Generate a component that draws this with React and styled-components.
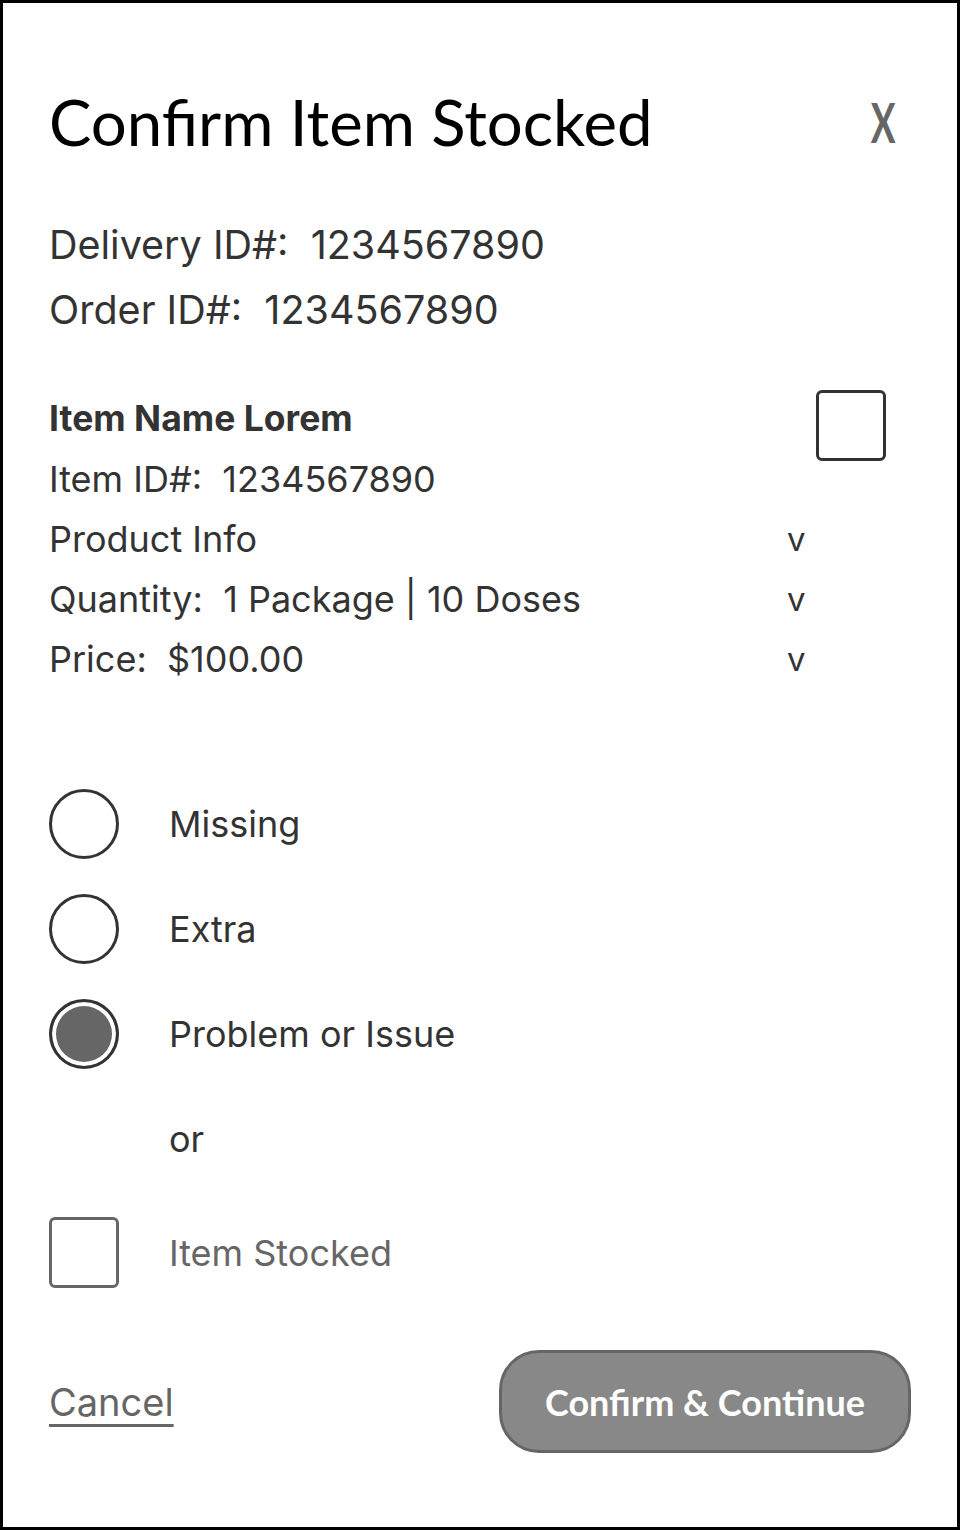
import React from "react";
import styled, { createGlobalStyle } from "styled-components";

const GlobalStyle = createGlobalStyle`
  html, body {
    margin: 0;
    padding: 0;
    background: #ffffff;
  }
  * {
    box-sizing: border-box;
  }
`;

const Frame = styled.div`
  width: 960px;
  height: 1530px;
  border: 3px solid #000;
  background: #fff;
  padding: 0 46px 0 46px;
  display: flex;
  flex-direction: column;
  font-family: Inter, "Noto Sans", sans-serif;
  color: #333;
`;

const Header = styled.div`
  display: flex;
  justify-content: space-between;
  align-items: flex-start;
  padding-top: 79px;
  height: 210px;
`;

const Title = styled.h1`
  margin: 0;
  font-family: Lato, "Open Sans", sans-serif;
  font-weight: 400;
  font-size: 63.5px;
  line-height: 80px;
  color: #000;
`;

const Close = styled.button`
  display: inline-block;
  border: none;
  background: none;
  padding: 0;
  margin-right: 15px;
  font-family: Lato, "Open Sans", sans-serif;
  font-weight: 700;
  font-size: 56px;
  line-height: 80px;
  color: #666;
  transform: scaleX(0.66);
  transform-origin: right center;
  cursor: pointer;
`;

const InfoLine = styled.div`
  font-size: 39.5px;
  line-height: 65px;
  white-space: pre;
`;

const ItemSection = styled.div`
  display: grid;
  grid-template-columns: 1fr auto;
  margin-top: 46px;
`;

const ItemRows = styled.div`
  display: flex;
  flex-direction: column;
`;

const ItemName = styled.div`
  font-size: 35.5px;
  font-weight: 700;
  line-height: 60px;
`;

const Row = styled.div`
  display: flex;
  justify-content: space-between;
  font-size: 36px;
  line-height: 60px;
  white-space: pre;
  width: 758px;
`;

const Chevron = styled.span`
  width: 20px;
  font-size: 33px;
`;

const BoxCheck = styled.span`
  display: block;
  flex-shrink: 0;
  width: 70px;
  height: 71px;
  border: 3px solid ${(p) => p.color || "#333"};
  border-radius: 6px;
  margin-top: ${(p) => p.offset || 0}px;
  margin-right: ${(p) => p.right || 0}px;
`;

const Options = styled.div`
  display: flex;
  flex-direction: column;
  gap: 35px;
  margin-top: 100px;
`;

const Option = styled.label`
  display: flex;
  align-items: center;
  gap: 50px;
  font-size: 36px;
  color: ${(p) => p.color || "#333"};
`;

const Radio = styled.span`
  width: 70px;
  height: 70px;
  border-radius: 50%;
  border: 3px solid #333;
  background: ${(p) => (p.checked ? "#666" : "#fff")};
  box-shadow: ${(p) => (p.checked ? "inset 0 0 0 4px #fff" : "none")};
  flex-shrink: 0;
`;

const OrText = styled.div`
  font-size: 36px;
  padding-left: 120px;
  line-height: 50px;
  margin: 45px 0 53px;
`;

const Footer = styled.div`
  display: flex;
  justify-content: space-between;
  align-items: center;
  margin-top: 62px;
`;

const CancelLink = styled.a`
  font-size: 38px;
  color: #666;
  text-decoration: underline;
  text-decoration-thickness: 3px;
  text-underline-offset: 8px;
  cursor: pointer;
`;

const PrimaryButton = styled.button`
  width: 412px;
  height: 103px;
  border: 3px solid #666;
  border-radius: 40px;
  background: #888;
  color: #fff;
  font-family: Lato, "Open Sans", sans-serif;
  font-weight: 700;
  font-size: 36px;
  cursor: pointer;
`;

const App = () => {
  return (
    <>
      <GlobalStyle />
      <Frame>
        <Header>
          <Title>Confirm Item Stocked</Title>
          <Close type="button">X</Close>
        </Header>
        <InfoLine>Delivery ID#:  1234567890</InfoLine>
        <InfoLine>Order ID#:  1234567890</InfoLine>

        <ItemSection>
          <ItemRows>
            <ItemName>Item Name Lorem</ItemName>
            <Row>Item ID#:  1234567890</Row>
            <Row>
              Product Info<Chevron>v</Chevron>
            </Row>
            <Row>
              Quantity:  1 Package | 10 Doses<Chevron>v</Chevron>
            </Row>
            <Row>
              Price:  $100.00<Chevron>v</Chevron>
            </Row>
          </ItemRows>
          <BoxCheck offset={1} right={25} />
        </ItemSection>

        <Options>
          <Option>
            <Radio />
            Missing
          </Option>
          <Option>
            <Radio />
            Extra
          </Option>
          <Option>
            <Radio checked />
            Problem or Issue
          </Option>
        </Options>

        <OrText>or</OrText>

        <Option color="#666">
          <BoxCheck color="#666" />
          Item Stocked
        </Option>

        <Footer>
          <CancelLink>Cancel</CancelLink>
          <PrimaryButton type="button">Confirm &amp; Continue</PrimaryButton>
        </Footer>
      </Frame>
    </>
  );
};

export default App;
